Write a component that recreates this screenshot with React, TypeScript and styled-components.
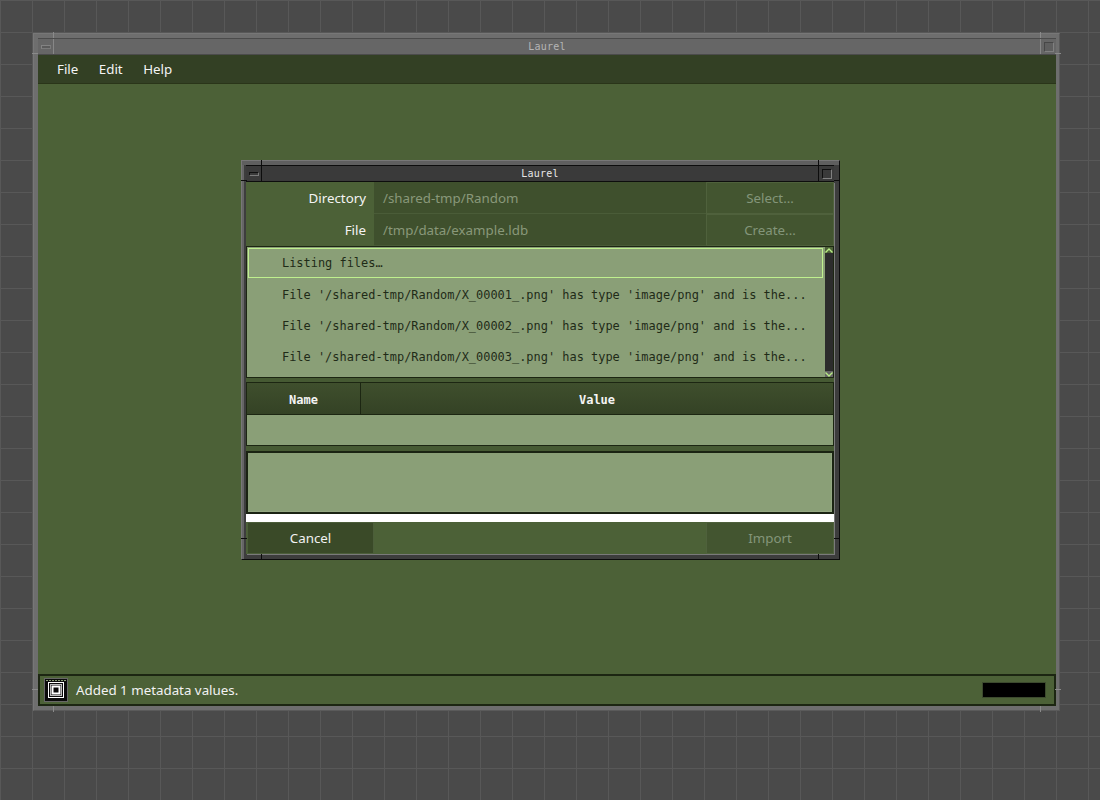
import React from "react";
import styled, { createGlobalStyle } from "styled-components";

const GlobalStyle = createGlobalStyle`
  html, body {
    margin: 0;
    padding: 0;
    width: 1100px;
    height: 800px;
    overflow: hidden;
    font-family: "Noto Sans", sans-serif;
  }
`;

const Desktop = styled.div`
  position: relative;
  width: 1100px;
  height: 800px;
  background-color: #4a4a4a;
  background-image:
    linear-gradient(to right, #585858 1px, transparent 1px),
    linear-gradient(to bottom, #585858 1px, transparent 1px);
  background-size: 32px 32px;
`;

// window frame, both the main window and the dialog use it
const Frame = styled.div<{ $x: number; $y: number; $w: number; $h: number; $active?: boolean }>`
  position: absolute;
  box-sizing: border-box;
  left: ${(p) => p.$x}px;
  top: ${(p) => p.$y}px;
  width: ${(p) => p.$w}px;
  height: ${(p) => p.$h}px;
  display: flex;
  flex-direction: column;
  padding: ${(p) => (p.$active ? "4px 5px 5px 4px" : "4px 3px 4px 4px")};
  background: ${(p) => (p.$active ? "#3d3d3d" : "#6e6e6e")};
  border-top: 1px solid #777;
  border-left: 1px solid #777;
  border-right: 1px solid ${(p) => (p.$active ? "#0c0c0c" : "#5a5a5a")};
  border-bottom: 1px solid ${(p) => (p.$active ? "#0c0c0c" : "#5a5a5a")};
  box-shadow: ${(p) => (p.$active ? "inset 0 4px 0 #5f5f5f, inset 2px 0 0 #666" : "none")};
`;

const Tick = styled.span<{
  $side: "top" | "bottom" | "left" | "right";
  $at: "start" | "end";
  $inset: number;
  $active?: boolean;
}>`
  position: absolute;
  background: ${(p) => (p.$active ? "#0c0c0c" : "#8a8a8a")};
  ${(p) => {
    const out = p.$active ? -1 : -2;
    return p.$side === "top" || p.$side === "bottom"
      ? `width: 1px; height: 6px; ${p.$side}: ${out}px; ${p.$at === "start" ? "left" : "right"}: ${p.$inset}px;`
      : `width: 6px; height: 1px; ${p.$side}: ${out}px; ${p.$at === "start" ? "top" : "bottom"}: ${p.$inset}px;`;
  }}
`;

const TitleBar = styled.div<{ $active?: boolean }>`
  display: flex;
  flex: none;
  height: 17px;
  box-sizing: border-box;
  background: ${(p) => (p.$active ? "#3a3a3a" : "#666")};
  border: 1px solid ${(p) => (p.$active ? "#0d0d0d" : "#4b4b4b")};
  border-left-width: 0;
  border-right-width: 0;
`;

const TitleBox = styled.div<{ $active?: boolean }>`
  flex: none;
  width: 15px;
  display: flex;
  align-items: center;
  justify-content: center;
  border-right: 1px solid ${(p) => (p.$active ? "#0d0d0d" : "#878787")};
  &:last-child {
    border-right: 0;
    border-left: 1px solid ${(p) => (p.$active ? "#0d0d0d" : "#878787")};
  }
`;

const MinGlyph = styled.div<{ $active?: boolean }>`
  width: 10px;
  height: 4px;
  box-sizing: border-box;
  background: ${(p) => (p.$active ? "#3a3a3a" : "#5b5b5b")};
  border: 1px solid ${(p) => (p.$active ? "#101010" : "#838383")};
  border-right-color: #7a7a7a;
  border-bottom-color: #7a7a7a;
`;

const MaxGlyph = styled.div<{ $active?: boolean }>`
  width: 10px;
  height: 10px;
  box-sizing: border-box;
  background: ${(p) => (p.$active ? "#3a3a3a" : "#5f5f5f")};
  border: 1px solid ${(p) => (p.$active ? "#101010" : "#474747")};
  border-right-color: #808080;
  border-bottom-color: #808080;
`;

const TitleText = styled.div<{ $active?: boolean }>`
  flex: 1;
  text-align: center;
  font-family: "DejaVu Sans Mono", monospace;
  font-size: 10px;
  line-height: 15px;
  color: ${(p) => (p.$active ? "#e6e6e6" : "#b5b5b5")};
  letter-spacing: 0.2px;
`;

const MainBody = styled.div`
  flex: 1;
  display: flex;
  flex-direction: column;
  min-height: 0;
  background: #4c6137;
`;

const MenuBar = styled.div`
  flex: none;
  display: flex;
  height: 29px;
  box-sizing: border-box;
  padding-left: 8.75px;
  background: #334024;
  border-bottom: 1px solid #2a3519;
`;

const MenuItem = styled.div`
  padding: 0 10.25px;
  font-size: 13.33px;
  line-height: 28px;
  color: #f4f4f4;
`;

const MainSpace = styled.div`
  flex: 1;
`;

const StatusBar = styled.div`
  flex: none;
  height: 32px;
  box-sizing: border-box;
  display: flex;
  align-items: center;
  padding: 0 8px 0 4px;
  border: 2px solid #1c2612;
  background: #4c6137;
`;

const StatusIcon = styled.div`
  flex: none;
  width: 24px;
  height: 24px;
  margin-right: 8px;
  background: #0b0b0b;
  border: 1px solid #666;
  box-sizing: border-box;
  display: flex;
  align-items: center;
  justify-content: center;
`;

const StatusText = styled.div`
  flex: 1;
  font-size: 13.33px;
  color: #f2f2f2;
`;

const Progress = styled.div`
  flex: none;
  width: 64px;
  height: 16px;
  box-sizing: border-box;
  background: #000;
  border: 1px solid #3c4a2e;
`;

const DialogBody = styled.div`
  flex: 1;
  display: flex;
  flex-direction: column;
  min-height: 0;
  background: #4c6137;
  box-shadow: 1px 1px 0 #7a7a7a;
`;

const FormRow = styled.div`
  flex: none;
  display: flex;
  height: 32px;
`;

const Label = styled.div`
  flex: none;
  width: 128px;
  box-sizing: border-box;
  padding-right: 8px;
  text-align: right;
  font-size: 13.33px;
  line-height: 32px;
  color: #f4f4f4;
`;

const Field = styled.div`
  flex: 1;
  padding-left: 9px;
  font-size: 13.33px;
  line-height: 32px;
  color: #89987a;
  background: #3f502d;
  box-shadow: inset 0 -1px 0 #4a5c38;
`;

const Button = styled.div<{ $width: number; $disabled?: boolean }>`
  flex: none;
  width: ${(p) => p.$width}px;
  box-sizing: border-box;
  text-align: center;
  font-size: 13.33px;
  line-height: 30px;
  color: ${(p) => (p.$disabled ? "#83957a" : "#f2f2f2")};
  background: ${(p) => (p.$disabled ? "#435530" : "#3a4a28")};
  border: 1px solid ${(p) => (p.$disabled ? "#4f613c" : "#4c5e3a")};
`;

const ListArea = styled.div`
  flex: none;
  display: flex;
  height: 132px;
  box-sizing: border-box;
  border: 1px solid #1c2612;
  background: #8a9f77;
`;

const List = styled.div`
  flex: 1;
  padding: 1px 0 0 1px;
`;

const ListRow = styled.div<{ $selected?: boolean }>`
  box-sizing: border-box;
  width: 575px;
  height: ${(p) => (p.$selected ? 30 : 31)}px;
  margin-bottom: ${(p) => (p.$selected ? 2 : 0)}px;
  padding-left: ${(p) => (p.$selected ? 33 : 34)}px;
  font-family: "DejaVu Sans Mono", monospace;
  font-size: 11.95px;
  line-height: ${(p) => (p.$selected ? 28 : 31)}px;
  white-space: pre;
  color: #1f2b17;
  border: ${(p) => (p.$selected ? "1px solid #bff08e" : "0")};
`;

const ScrollBar = styled.div`
  flex: none;
  width: 8px;
  display: flex;
  flex-direction: column;
  background: #2c2c2c;
`;

const ScrollEnd = styled.div<{ $bottom?: boolean }>`
  flex: none;
  height: 6px;
  background: ${(p) => (p.$bottom ? "#666" : "#4c6137")};
  display: flex;
  align-items: center;
  justify-content: center;
`;

const ScrollTrack = styled.div`
  flex: 1;
  background: #2c2c2c;
`;

const Gap = styled.div<{ $h: number }>`
  flex: none;
  height: ${(p) => p.$h}px;
  background: #465a33;
`;

const TableHead = styled.div`
  flex: none;
  display: flex;
  height: 33px;
  box-sizing: border-box;
  border: 1px solid #1c2612;
  background: linear-gradient(to bottom, #3f4f2d, #344225);
`;

const HeadCell = styled.div<{ $width?: number }>`
  box-sizing: border-box;
  ${(p) => (p.$width ? `flex: none; width: ${p.$width}px; border-right: 1px solid #1c2612;` : "flex: 1;")}
  text-align: center;
  font-family: "DejaVu Sans Mono", monospace;
  font-weight: bold;
  font-size: 12px;
  line-height: 34px;
  color: #f4f4f4;
`;

const TableRow = styled.div`
  flex: none;
  height: 31px;
  box-sizing: border-box;
  background: #8a9f77;
  border: 1px solid #1c2612;
  border-top: 0;
`;

const TextArea = styled.div`
  flex: none;
  height: 63px;
  box-sizing: border-box;
  background: #8a9f77;
  border: 2px solid #1a2312;
  box-shadow: inset -1px -1px 0 #93a781;
`;

const WhiteBar = styled.div`
  flex: none;
  height: 8px;
  background: #fff;
`;

const ButtonRow = styled.div`
  flex: 1;
  display: flex;
  justify-content: space-between;
  padding-left: 1px;
`;

const Chevron = ({ up }: { up?: boolean }) => (
  <svg width="8" height="5" viewBox="0 0 8 5">
    <path d={up ? "M0.5 4.5 L4 1 L7.5 4.5" : "M0.5 0.5 L4 4 L7.5 0.5"} fill="none" stroke="#b9ec86" strokeWidth="1.4" />
  </svg>
);

const AppGlyph = () => (
  <svg width="22" height="22" viewBox="0 0 22 22">
    <path d="M1 1.5 H21" stroke="#8a9f77" strokeDasharray="2 1" />
    <rect x="3.5" y="3.5" width="15" height="15" fill="none" stroke="#fff" />
    <rect x="5.5" y="5.5" width="11" height="11" fill="none" stroke="#bbb" />
    <rect x="7.5" y="7.5" width="7" height="7" fill="none" stroke="#fff" strokeWidth="2" />
  </svg>
);

const FrameTicks = ({ active, endInset }: { active?: boolean; endInset: number }) => (
  <>
    <Tick $side="top" $at="start" $inset={19} $active={active} />
    <Tick $side="top" $at="end" $inset={endInset} $active={active} />
    <Tick $side="bottom" $at="start" $inset={19} $active={active} />
    <Tick $side="bottom" $at="end" $inset={endInset} $active={active} />
    <Tick $side="left" $at="start" $inset={19} $active={active} />
    <Tick $side="left" $at="end" $inset={20} $active={active} />
    <Tick $side="right" $at="start" $inset={19} $active={active} />
    <Tick $side="right" $at="end" $inset={20} $active={active} />
  </>
);

const Title = ({ active }: { active?: boolean }) => (
  <TitleBar $active={active}>
    <TitleBox $active={active}>
      <MinGlyph $active={active} />
    </TitleBox>
    <TitleText $active={active}>Laurel</TitleText>
    <TitleBox $active={active}>
      <MaxGlyph $active={active} />
    </TitleBox>
  </TitleBar>
);

const fileRows = [
  "File '/shared-tmp/Random/X_00001_.png' has type 'image/png' and is the...",
  "File '/shared-tmp/Random/X_00002_.png' has type 'image/png' and is the...",
  "File '/shared-tmp/Random/X_00003_.png' has type 'image/png' and is the...",
];

const App = () => {
  return (
    <Desktop>
      <GlobalStyle />
      <Frame $x={33} $y={33} $w={1027} $h={678}>
        <FrameTicks endInset={18} />
        <Title />
        <MainBody>
          <MenuBar>
            <MenuItem>File</MenuItem>
            <MenuItem>Edit</MenuItem>
            <MenuItem>Help</MenuItem>
          </MenuBar>
          <MainSpace />
          <StatusBar>
            <StatusIcon>
              <AppGlyph />
            </StatusIcon>
            <StatusText>Added 1 metadata values.</StatusText>
            <Progress />
          </StatusBar>
        </MainBody>
      </Frame>

      <Frame $x={241} $y={160} $w={599} $h={400} $active>
        <FrameTicks active endInset={20} />
        <Title active />
        <DialogBody>
          <FormRow>
            <Label>Directory</Label>
            <Field>/shared-tmp/Random</Field>
            <Button $width={128} $disabled>Select...</Button>
          </FormRow>
          <FormRow>
            <Label>File</Label>
            <Field>/tmp/data/example.ldb</Field>
            <Button $width={128} $disabled>Create...</Button>
          </FormRow>
          <ListArea>
            <List>
              <ListRow $selected>Listing files…</ListRow>
              {fileRows.map((row) => (
                <ListRow key={row}>{row}</ListRow>
              ))}
            </List>
            <ScrollBar>
              <ScrollEnd>
                <Chevron up />
              </ScrollEnd>
              <ScrollTrack />
              <ScrollEnd $bottom>
                <Chevron />
              </ScrollEnd>
            </ScrollBar>
          </ListArea>
          <Gap $h={4} />
          <TableHead>
            <HeadCell $width={114}>Name</HeadCell>
            <HeadCell>Value</HeadCell>
          </TableHead>
          <TableRow />
          <Gap $h={5} />
          <TextArea />
          <WhiteBar />
          <ButtonRow>
            <Button $width={127}>Cancel</Button>
            <Button $width={128} $disabled>Import</Button>
          </ButtonRow>
        </DialogBody>
      </Frame>
    </Desktop>
  );
};

export default App;
